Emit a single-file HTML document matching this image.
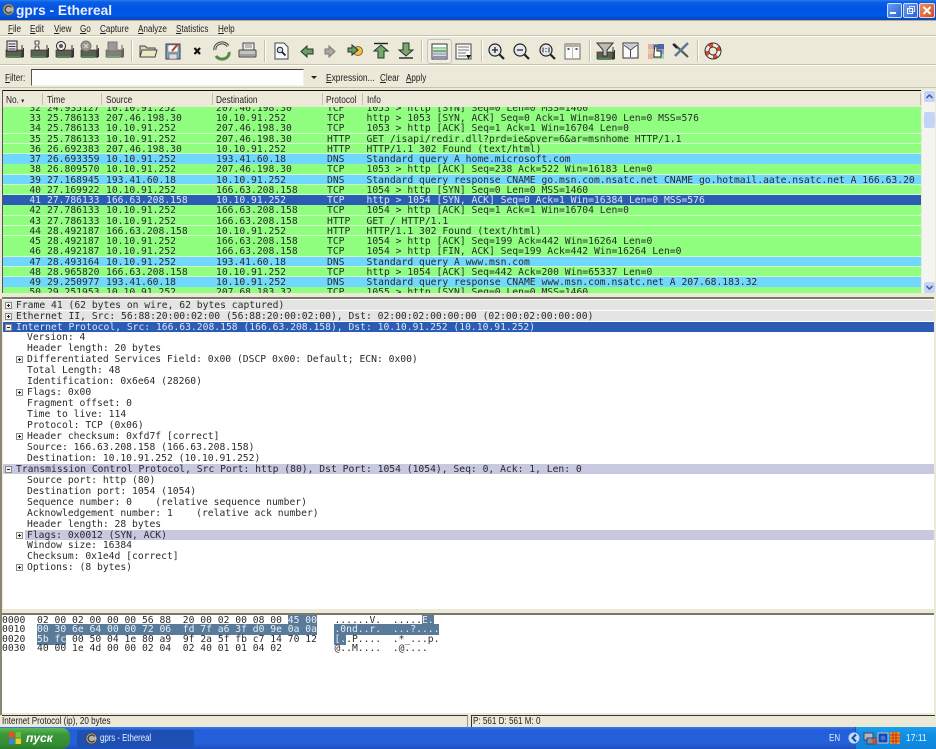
<!DOCTYPE html>
<html><head><meta charset="utf-8"><title>gprs - Ethereal</title>
<style>
html{background:#ece9d8}
html,body{margin:0;padding:0;width:936px;height:749px;overflow:hidden}
body{background:#ece9d8;filter:blur(.35px)}
*{box-sizing:border-box}
.a{position:absolute}
#title{left:0;top:0;width:936px;height:20px;background:linear-gradient(#2a7bf0 0,#0a5fe6 2px,#0054e3 8px,#0058e8 15px,#0a45b8 20px)}
.u{font:10px "Liberation Sans",sans-serif;color:#222;position:absolute;white-space:nowrap;transform:scaleX(.81);transform-origin:0 0}
.u u{text-decoration:underline}
.hl{position:absolute;left:0;width:936px;height:1px}
.m{font-family:"DejaVu Sans Mono",monospace;font-size:9.7px;white-space:pre;color:#2a2a2a}
#list{left:3px;top:107px;width:918px;height:186px;overflow:hidden;background:#d4ffcc}
.r{position:absolute;left:0;width:918px;height:9.6px;line-height:12px;background:#90ff80}
.r span{position:absolute;top:0}
.r span:nth-child(1){right:880px}
.r span:nth-child(2){left:44px}
.r span:nth-child(3){left:103px}
.r span:nth-child(4){left:213px}
.r span:nth-child(5){left:324px}
.r span:nth-child(6){left:363.5px}
.b{background:#70d8ff}
.s{background:#2a5cb4;color:#dde6f6}
#det{left:3px;top:299px;width:931px;height:310px;background:#fff;overflow:hidden}
.d{position:absolute;left:0;height:10.5px;line-height:11px;margin-top:.6px}
.d b{font-weight:normal;position:absolute;top:0}
.x{position:absolute;width:7px;height:7px;border:1px solid #8a8a80;background:#f4f4ee}
.x:before{content:"";position:absolute;left:1px;top:2px;width:3px;height:1px;background:#222}
.x.p:after{content:"";position:absolute;left:2px;top:1px;width:1px;height:3px;background:#222}
#hex{left:2px;top:615px;width:932px;height:98px;background:#fff}
.h{position:absolute;left:0;height:9.4px;line-height:11.4px}
.sl{background:#5a7a9a;color:#e8eef4}
.sep{position:absolute;top:40px;width:2px;height:22px;background:#c4c0aa;border-right:1px solid #fff}
.col{position:absolute;top:93px;width:1px;height:12px;background:#c4c0aa}
.hd{font:10px "Liberation Sans",sans-serif;color:#222;position:absolute;top:95px;white-space:nowrap;transform:scaleX(.83);transform-origin:0 0}
</style></head>
<body>
<div class="a" id="title"></div>
<svg class="a" style="left:2px;top:3px" width="13" height="13" viewBox="0 0 13 13"><circle cx="6.5" cy="6.5" r="5.6" fill="#b4b4ac" stroke="#50605e"/><path d="M9.5 4.5A3.5 3.5 0 1 0 9.5 8.5" fill="none" stroke="#444" stroke-width="1.5"/></svg>
<div class="a" style="left:16px;top:2px;font:bold 14px 'Liberation Sans',sans-serif;color:#eef;white-space:nowrap;transform:scaleX(.98);transform-origin:0 0">gprs - Ethereal</div>
<!-- window buttons -->
<div class="a" style="left:887px;top:3px;width:15px;height:15px;border-radius:2px;background:linear-gradient(135deg,#6a9cf0,#2a62d8);border:1px solid #cfe0fb"></div>
<div class="a" style="left:890px;top:12px;width:6px;height:2px;background:#fff"></div>
<div class="a" style="left:903px;top:3px;width:15px;height:15px;border-radius:2px;background:linear-gradient(135deg,#6a9cf0,#2a62d8);border:1px solid #cfe0fb"></div>
<div class="a" style="left:907px;top:8px;width:6px;height:6px;border:1px solid #fff"></div>
<div class="a" style="left:909px;top:6px;width:6px;height:6px;border:1px solid #dde"></div>
<div class="a" style="left:919px;top:3px;width:16px;height:15px;border-radius:2px;background:linear-gradient(135deg,#f09060,#d04a20);border:1px solid #f3d5c6"></div>
<svg class="a" style="left:919px;top:3px" width="16" height="15"><path d="M4.500 4L11.500 11M11.500 4L4.500 11" stroke="#fff" stroke-width="2"/></svg>
<!-- bars -->
<div class="hl" style="top:20px;height:1px;background:#b0ac98"></div>
<div class="hl" style="top:35px;background:#c8c4ae"></div><div class="hl" style="top:36px;background:#fff"></div>
<div class="hl" style="top:64px;background:#c8c4ae"></div><div class="hl" style="top:65px;background:#fff"></div>
<div class="hl" style="top:87px;background:#c8c4ae"></div>
<!-- menu -->
<span class="u" style="left:8px;top:24px"><u>F</u>ile</span>
<span class="u" style="left:30px;top:24px"><u>E</u>dit</span>
<span class="u" style="left:54px;top:24px"><u>V</u>iew</span>
<span class="u" style="left:80px;top:24px"><u>G</u>o</span>
<span class="u" style="left:100px;top:24px"><u>C</u>apture</span>
<span class="u" style="left:138px;top:24px"><u>A</u>nalyze</span>
<span class="u" style="left:176px;top:24px"><u>S</u>tatistics</span>
<span class="u" style="left:218px;top:24px"><u>H</u>elp</span>
<!-- toolbar -->
<div class="sep" style="left:131px"></div><div class="sep" style="left:264px"></div><div class="sep" style="left:421px"></div><div class="sep" style="left:481px"></div><div class="sep" style="left:589px"></div><div class="sep" style="left:697px"></div>
<div class="a" style="left:427px;top:39px;width:25px;height:25px;border:1px solid #c8c4b4;border-radius:3px;background:#f0eee4"></div>
<svg class="a" style="left:0;top:36px" width="936" height="30" viewBox="0 36 936 30">
<defs>
<g id="card"><rect x="0" y="9" width="17" height="7" fill="#5e5e52" stroke="#333" stroke-width=".7"/><rect x="1" y="15" width="13" height="2" fill="#4f8a5a"/><path d="M16 4V17M17.500 7V16" stroke="#333" stroke-width="1"/></g>
</defs>
<use href="#card" x="6" y="41"/><rect x="7" y="41" width="10" height="10" fill="#e8e8ee" stroke="#222"/><path d="M8.500 44H15.500M8.500 46.500H15.500M8.500 49H15.500" stroke="#334"/>
<use href="#card" x="31" y="41"/><path d="M35 41H39V44H38V47H39V50H35V47H36V44H35Z" fill="#fff" stroke="#222" stroke-width=".8"/>
<use href="#card" x="56" y="41"/><circle cx="61" cy="46" r="4.500" fill="#eee" stroke="#222"/><circle cx="61" cy="46" r="2" fill="#555"/>
<use href="#card" x="81" y="41"/><circle cx="86" cy="46" r="5" fill="#9a9a90" stroke="#777"/><path d="M84 44L88 48M88 44L84 48" stroke="#ddd"/>
<use href="#card" x="106" y="41" opacity=".75"/><rect x="108" y="42" width="9" height="9" fill="#999" stroke="#777"/>
<path d="M140 57V46H145L147 48H155V57Z" fill="#d8d4b4" stroke="#444"/><path d="M140 57L142 50H157L155 57Z" fill="#eee8c4" stroke="#444"/>
<rect x="166" y="44" width="14" height="15" fill="#8aa8c8" stroke="#335"/><rect x="168" y="45" width="10" height="7" fill="#fafaf0" stroke="#666" stroke-width=".5"/><rect x="169" y="54" width="8" height="5" fill="#ddd" stroke="#555" stroke-width=".5"/><path d="M172 51L178 44" stroke="#b0402a" stroke-width="2"/>
<path d="M194.500 48L200 54M200 48L194.500 54" stroke="#111" stroke-width="2.200"/>
<path d="M215 50A7 6 0 0 1 228 46" fill="none" stroke="#444" stroke-width="3"/><path d="M229 52A7 6 0 0 1 216 56" fill="none" stroke="#5a8a4a" stroke-width="3"/><path d="M215 50A7 6 0 0 1 228 46" fill="none" stroke="#cfe8c0" stroke-width="1"/>
<rect x="243" y="43" width="11" height="7" fill="#eee" stroke="#444"/><rect x="239" y="50" width="17" height="7" rx="1" fill="#c4c4c0" stroke="#444"/><path d="M245 45H252M245 47H252" stroke="#888"/><path d="M240 55H255" stroke="#777"/>
<path d="M275 43H284L288 47V59H275Z" fill="#fafafa" stroke="#445"/><circle cx="280" cy="50" r="2.800" fill="#cde" stroke="#222"/><path d="M282 52L285.500 55.500" stroke="#222" stroke-width="1.800"/>
<path d="M301 51.500L307 46V49H313V54H307V57Z" fill="#6aa05a" stroke="#234"/>
<path d="M335 51.500L329 46V49H325V54H329V57Z" fill="#a8a8a0" stroke="#777"/>
<circle cx="358" cy="51" r="4.500" fill="#f0c040" stroke="#864"/><path d="M358 50L352 45V48H348V52H352V55Z" fill="#6aa05a" stroke="#234"/>
<path d="M374 43.500H388" stroke="#222" stroke-width="1.400"/><path d="M381 45L388 51H384V58H378V51H374Z" fill="#7aa86a" stroke="#233"/>
<path d="M399 58H413" stroke="#222" stroke-width="1.400"/><path d="M406 56L413 50H409V43H403V50H399Z" fill="#7aa86a" stroke="#233"/>
<rect x="432" y="44" width="15" height="15" fill="#fff" stroke="#333"/><rect x="433" y="47" width="13" height="2.500" fill="#90d890"/><rect x="433" y="50" width="13" height="2.500" fill="#80a880"/><rect x="433" y="53" width="13" height="2.500" fill="#b0b0d8"/><rect x="433" y="56" width="13" height="2" fill="#9090b0"/>
<rect x="456" y="44" width="15" height="15" fill="#fafafa" stroke="#444"/><path d="M458 47H469M458 50H469M458 53H466M458 56H466" stroke="#777"/><path d="M466 55H471L468.500 59Z" fill="#111"/>
<g fill="#e4e8ee" stroke="#222" stroke-width="1.200"><circle cx="495" cy="50" r="6"/><circle cx="520" cy="50" r="6"/><circle cx="546" cy="50" r="6"/></g>
<path d="M499.500 54.500L504 59M524.500 54.500L529 59M550.500 54.500L555 59" stroke="#222" stroke-width="2.200"/>
<path d="M492 50H498M495 47V53M517 50H523" stroke="#222" stroke-width="1.300"/>
<path d="M543 47.500V52.500M549 47.500V52.500M546 48V49M546 51V52" stroke="#222"/>
<rect x="565" y="44" width="15" height="15" fill="#fafaf6" stroke="#666"/><rect x="565" y="44" width="15" height="3" fill="#b0b0a4"/><path d="M572.500 44V59" stroke="#bbb"/><path d="M567 49H570M568.500 48V50M575 49H578M576.500 48V50" stroke="#556"/>
<use href="#card" x="597" y="43"/><path d="M597 43H613L607 50V56H603V50Z" fill="#bcbcb0" stroke="#333"/>
<rect x="623" y="43" width="15" height="15" fill="#fafafa" stroke="#333"/><path d="M624 45L630.500 50V57M637 45L630.500 50" stroke="#445" fill="none"/><path d="M625 44H636L631.500 49H629.500Z" fill="#c8ccd8"/>
<rect x="648" y="44" width="5" height="5" fill="#e0b0a0"/><rect x="648" y="49" width="5" height="5" fill="#e8c8a8"/><rect x="648" y="54" width="5" height="5" fill="#f0a8a8"/><rect x="653" y="44" width="5" height="5" fill="#8090c8"/><rect x="658" y="44" width="6" height="5" fill="#4868a8"/><rect x="658" y="49" width="6" height="5" fill="#90a0c8"/><rect x="653" y="54" width="11" height="5" fill="#a0d8a8"/>
<path d="M655 46H657V51H661V57H654V52Z" fill="#fff" stroke="#222"/>
<path d="M674 44L688 57" stroke="#555" stroke-width="2.200"/><path d="M688 43L675 56" stroke="#5a7a9a" stroke-width="2.600"/><path d="M673 44L677 48" stroke="#222" stroke-width="2"/>
<circle cx="713" cy="51" r="6" fill="none" stroke="#e04a20" stroke-width="4"/><circle cx="713" cy="51" r="6" fill="none" stroke="#eee" stroke-width="4" stroke-dasharray="5 4.400"/><circle cx="713" cy="51" r="8" fill="none" stroke="#333"/><circle cx="713" cy="51" r="4" fill="none" stroke="#333"/>
</svg>
<!-- filter -->
<span class="u" style="left:5px;top:73px"><u>F</u>ilter:</span>
<div class="a" style="left:31px;top:69px;width:273px;height:17px;background:#fff;border:1px solid #f4f2e8;border-left-color:#555;border-top-color:#444"></div>
<div class="a" style="left:311px;top:76px;border:3px solid transparent;border-top:3px solid #222;width:0;height:0"></div>
<span class="u" style="left:326px;top:73px;transform:scaleX(.84)"><u>E</u>xpression...</span>
<span class="u" style="left:380px;top:73px"><u>C</u>lear</span>
<span class="u" style="left:406px;top:73px"><u>A</u>pply</span>
<!-- list header -->
<div class="a" style="left:2px;top:90px;width:919px;height:1px;background:#111"></div>
<div class="a" style="left:2px;top:90px;width:1px;height:203px;background:#555"></div>
<div class="hd" style="left:6px">No. <span style="font-size:7px">▾</span></div><div class="col" style="left:42px"></div>
<div class="hd" style="left:47px">Time</div><div class="col" style="left:101px"></div>
<div class="hd" style="left:106px">Source</div><div class="col" style="left:212px"></div>
<div class="hd" style="left:216px">Destination</div><div class="col" style="left:322px"></div>
<div class="hd" style="left:326px">Protocol</div><div class="col" style="left:362px"></div>
<div class="hd" style="left:367px">Info</div><div class="col" style="left:920px"></div>
<!-- list -->
<div class="a m" id="list">
<div class="r" style="top:-4.100px"><span>32</span><span>24.935127</span><span>10.10.91.252</span><span>207.46.198.30</span><span>TCP</span><span>1053 &gt; http [SYN] Seq=0 Len=0 MSS=1460</span></div>
<div class="r" style="top:6.150px"><span>33</span><span>25.786133</span><span>207.46.198.30</span><span>10.10.91.252</span><span>TCP</span><span>http &gt; 1053 [SYN, ACK] Seq=0 Ack=1 Win=8190 Len=0 MSS=576</span></div>
<div class="r" style="top:16.400px"><span>34</span><span>25.786133</span><span>10.10.91.252</span><span>207.46.198.30</span><span>TCP</span><span>1053 &gt; http [ACK] Seq=1 Ack=1 Win=16704 Len=0</span></div>
<div class="r" style="top:26.650px"><span>35</span><span>25.786133</span><span>10.10.91.252</span><span>207.46.198.30</span><span>HTTP</span><span>GET /isapi/redir.dll?prd=ie&amp;pver=6&amp;ar=msnhome HTTP/1.1</span></div>
<div class="r" style="top:36.900px"><span>36</span><span>26.692383</span><span>207.46.198.30</span><span>10.10.91.252</span><span>HTTP</span><span>HTTP/1.1 302 Found (text/html)</span></div>
<div class="r b" style="top:47.150px"><span>37</span><span>26.693359</span><span>10.10.91.252</span><span>193.41.60.18</span><span>DNS</span><span>Standard query A home.microsoft.com</span></div>
<div class="r" style="top:57.400px"><span>38</span><span>26.809570</span><span>10.10.91.252</span><span>207.46.198.30</span><span>TCP</span><span>1053 &gt; http [ACK] Seq=238 Ack=522 Win=16183 Len=0</span></div>
<div class="r b" style="top:67.650px"><span>39</span><span>27.168945</span><span>193.41.60.18</span><span>10.10.91.252</span><span>DNS</span><span>Standard query response CNAME go.msn.com.nsatc.net CNAME go.hotmail.aate.nsatc.net A 166.63.20</span></div>
<div class="r" style="top:77.900px"><span>40</span><span>27.169922</span><span>10.10.91.252</span><span>166.63.208.158</span><span>TCP</span><span>1054 &gt; http [SYN] Seq=0 Len=0 MSS=1460</span></div>
<div class="r s" style="top:88.150px"><span>41</span><span>27.786133</span><span>166.63.208.158</span><span>10.10.91.252</span><span>TCP</span><span>http &gt; 1054 [SYN, ACK] Seq=0 Ack=1 Win=16384 Len=0 MSS=576</span></div>
<div class="r" style="top:98.400px"><span>42</span><span>27.786133</span><span>10.10.91.252</span><span>166.63.208.158</span><span>TCP</span><span>1054 &gt; http [ACK] Seq=1 Ack=1 Win=16704 Len=0</span></div>
<div class="r" style="top:108.650px"><span>43</span><span>27.786133</span><span>10.10.91.252</span><span>166.63.208.158</span><span>HTTP</span><span>GET / HTTP/1.1</span></div>
<div class="r" style="top:118.900px"><span>44</span><span>28.492187</span><span>166.63.208.158</span><span>10.10.91.252</span><span>HTTP</span><span>HTTP/1.1 302 Found (text/html)</span></div>
<div class="r" style="top:129.150px"><span>45</span><span>28.492187</span><span>10.10.91.252</span><span>166.63.208.158</span><span>TCP</span><span>1054 &gt; http [ACK] Seq=199 Ack=442 Win=16264 Len=0</span></div>
<div class="r" style="top:139.400px"><span>46</span><span>28.492187</span><span>10.10.91.252</span><span>166.63.208.158</span><span>TCP</span><span>1054 &gt; http [FIN, ACK] Seq=199 Ack=442 Win=16264 Len=0</span></div>
<div class="r b" style="top:149.650px"><span>47</span><span>28.493164</span><span>10.10.91.252</span><span>193.41.60.18</span><span>DNS</span><span>Standard query A www.msn.com</span></div>
<div class="r" style="top:159.900px"><span>48</span><span>28.965820</span><span>166.63.208.158</span><span>10.10.91.252</span><span>TCP</span><span>http &gt; 1054 [ACK] Seq=442 Ack=200 Win=65337 Len=0</span></div>
<div class="r b" style="top:170.150px"><span>49</span><span>29.250977</span><span>193.41.60.18</span><span>10.10.91.252</span><span>DNS</span><span>Standard query response CNAME www.msn.com.nsatc.net A 207.68.183.32</span></div>
<div class="r" style="top:180.400px"><span>50</span><span>29.251953</span><span>10.10.91.252</span><span>207.68.183.32</span><span>TCP</span><span>1055 &gt; http [SYN] Seq=0 Len=0 MSS=1460</span></div>
</div>
<!-- scrollbar -->
<div class="a" style="left:922px;top:90px;width:13px;height:203px;background:#f4f4f0"></div>
<div class="a" style="left:924px;top:91px;width:11px;height:11px;background:#c4d4f8;border-radius:2px"></div>
<svg class="a" style="left:924px;top:91px" width="11" height="11"><path d="M2.500 7L5.500 4L8.500 7" stroke="#3a5a90" stroke-width="1.500" fill="none"/></svg>
<div class="a" style="left:924px;top:112px;width:11px;height:16px;background:#c4d4f8;border-radius:2px"></div>
<div class="a" style="left:924px;top:282px;width:11px;height:11px;background:#c4d4f8;border-radius:2px"></div>
<svg class="a" style="left:924px;top:282px" width="11" height="11"><path d="M2.500 4L5.500 7L8.500 4" stroke="#3a5a90" stroke-width="1.500" fill="none"/></svg>
<!-- divider -->
<div class="a" style="left:2px;top:297px;width:932px;height:2px;background:#7a7868"></div>
<!-- details -->
<div class="a" style="left:0;top:299px;width:2px;height:416px;background:#8a8672"></div>
<div class="a m" id="det">
<div class="d" style="top:0;width:931px;background:#e4e4e4"><i class="x p" style="left:2px;top:2px"></i><b style="left:13px">Frame 41 (62 bytes on wire, 62 bytes captured)</b></div>
<div class="d" style="top:11px;width:931px;background:#e4e4e4"><i class="x p" style="left:2px;top:2px"></i><b style="left:13px">Ethernet II, Src: 56:88:20:00:02:00 (56:88:20:00:02:00), Dst: 02:00:02:00:00:00 (02:00:02:00:00:00)</b></div>
<div class="d" style="top:22px;width:931px;background:#2a5cb4;color:#dde6f6"><i class="x" style="left:2px;top:2px"></i><b style="left:13px">Internet Protocol, Src: 166.63.208.158 (166.63.208.158), Dst: 10.10.91.252 (10.10.91.252)</b></div>
<div class="d" style="top:32.900px"><b style="left:24px">Version: 4</b></div>
<div class="d" style="top:43.800px"><b style="left:24px">Header length: 20 bytes</b></div>
<div class="d" style="top:54.800px"><i class="x p" style="left:13px;top:2px"></i><b style="left:24px">Differentiated Services Field: 0x00 (DSCP 0x00: Default; ECN: 0x00)</b></div>
<div class="d" style="top:65.700px"><b style="left:24px">Total Length: 48</b></div>
<div class="d" style="top:76.700px"><b style="left:24px">Identification: 0x6e64 (28260)</b></div>
<div class="d" style="top:87.600px"><i class="x p" style="left:13px;top:2px"></i><b style="left:24px">Flags: 0x00</b></div>
<div class="d" style="top:98.600px"><b style="left:24px">Fragment offset: 0</b></div>
<div class="d" style="top:109.500px"><b style="left:24px">Time to live: 114</b></div>
<div class="d" style="top:120.500px"><b style="left:24px">Protocol: TCP (0x06)</b></div>
<div class="d" style="top:131.400px"><i class="x p" style="left:13px;top:2px"></i><b style="left:24px">Header checksum: 0xfd7f [correct]</b></div>
<div class="d" style="top:142.400px"><b style="left:24px">Source: 166.63.208.158 (166.63.208.158)</b></div>
<div class="d" style="top:153.300px"><b style="left:24px">Destination: 10.10.91.252 (10.10.91.252)</b></div>
<div class="d" style="top:164.300px;width:931px;background:#c8c8e0"><i class="x" style="left:2px;top:2px"></i><b style="left:13px">Transmission Control Protocol, Src Port: http (80), Dst Port: 1054 (1054), Seq: 0, Ack: 1, Len: 0</b></div>
<div class="d" style="top:175.200px"><b style="left:24px">Source port: http (80)</b></div>
<div class="d" style="top:186.200px"><b style="left:24px">Destination port: 1054 (1054)</b></div>
<div class="d" style="top:197.100px"><b style="left:24px">Sequence number: 0    (relative sequence number)</b></div>
<div class="d" style="top:208.100px"><b style="left:24px">Acknowledgement number: 1    (relative ack number)</b></div>
<div class="d" style="top:219px"><b style="left:24px">Header length: 28 bytes</b></div>
<div class="d" style="top:230px;width:931px"><i class="x p" style="left:13px;top:2px"></i><div class="a" style="left:22px;top:0;width:909px;height:10.500px;background:#c8c8e0"></div><b style="left:24px">Flags: 0x0012 (SYN, ACK)</b></div>
<div class="d" style="top:240.900px"><b style="left:24px">Window size: 16384</b></div>
<div class="d" style="top:251.900px"><b style="left:24px">Checksum: 0x1e4d [correct]</b></div>
<div class="d" style="top:262.800px"><i class="x p" style="left:13px;top:2px"></i><b style="left:24px">Options: (8 bytes)</b></div>
</div>
<!-- divider 2 -->
<div class="a" style="left:2px;top:613px;width:932px;height:2px;background:#7a7868"></div>
<!-- hex -->
<div class="a m" id="hex">
<div class="h" style="top:0">0000  02 00 02 00 00 00 56 88  20 00 02 00 08 00 <span class="sl">45 00</span>   ......V.  .....<span class="sl">E.</span></div>
<div class="h" style="top:9.400px">0010  <span class="sl">00 30 6e 64 00 00 72 06  fd 7f a6 3f d0 9e 0a 0a</span>   <span class="sl">.0nd..r.  ...?....</span></div>
<div class="h" style="top:18.800px">0020  <span class="sl">5b fc</span> 00 50 04 1e 80 a9  9f 2a 5f fb c7 14 70 12   <span class="sl">[.</span>.P....  .*_...p.</div>
<div class="h" style="top:28.200px">0030  40 00 1e 4d 00 00 02 04  02 40 01 01 04 02         @..M....  .@....</div>
</div>
<!-- status -->
<div class="a" style="left:2px;top:715px;width:466px;height:12px;background:#ece9d8;border-top:1px solid #333;border-right:1px solid #999"></div>
<div class="a" style="left:471px;top:715px;width:464px;height:12px;background:#ece9d8;border-top:1px solid #333;border-left:1px solid #333"></div>
<span class="u" style="left:2px;top:716px">Internet Protocol (ip), 20 bytes</span>
<span class="u" style="left:473px;top:716px">P: 561 D: 561 M: 0</span>
<!-- taskbar -->
<div class="a" style="left:0;top:727px;width:936px;height:22px;background:linear-gradient(#3a7ce8 0,#245edc 3px,#2560d8 16px,#1c4ec0 22px)"></div>
<div class="a" style="left:0;top:728px;width:70px;height:21px;border-radius:0 8px 8px 0;background:linear-gradient(#5cb85c,#3a983a 30%,#348c34 80%,#2a7a2a)"></div>
<svg class="a" style="left:8px;top:731px" width="14" height="14"><rect x="1" y="1" width="5.500" height="5.500" fill="#e85020"/><rect x="7.500" y="1" width="5.500" height="5.500" fill="#70c040"/><rect x="1" y="7.500" width="5.500" height="5.500" fill="#4080e0"/><rect x="7.500" y="7.500" width="5.500" height="5.500" fill="#f8c820"/></svg>
<div class="a" style="left:26px;top:731px;font:italic bold 12px 'Liberation Sans',sans-serif;color:#fff">пуск</div>
<div class="a" style="left:77px;top:730px;width:117px;height:18px;background:#1e50b4;border-radius:2px"></div>
<svg class="a" style="left:85px;top:732px" width="13" height="13"><circle cx="6.500" cy="6.500" r="5.600" fill="#b4b4ac" stroke="#444"/><path d="M9.500 4.500A3.500 3.500 0 1 0 9.500 8.500" fill="none" stroke="#444" stroke-width="1.500"/></svg>
<div class="a" style="left:100px;top:733px;font:10px 'Liberation Sans',sans-serif;color:#e8f0ff;white-space:nowrap;transform:scaleX(.78);transform-origin:0 0">gprs - Ethereal</div>
<div class="a" style="left:829px;top:733px;font:10px 'Liberation Sans',sans-serif;color:#dfe8ff;transform:scaleX(.8);transform-origin:0 0">EN</div>
<div class="a" style="left:855px;top:727px;width:81px;height:22px;background:linear-gradient(#1ca0f0,#1290e4 30%,#0f84dc);border-left:1px solid #0f5ab0"></div>
<svg class="a" style="left:848px;top:729px" width="88" height="18">
<circle cx="6" cy="9" r="6" fill="#c0dcf8" stroke="#2a6ad0"/><path d="M8 5.500L4.500 9L8 12.500" stroke="#1a4ab0" stroke-width="2" fill="none"/>
<rect x="16" y="4" width="9" height="7" fill="#b0b8c8" stroke="#445"/><rect x="19" y="9" width="9" height="6" fill="#8090a8" stroke="#445"/><path d="M24 10L29 15M29 10L24 15" stroke="#e04020" stroke-width="1.500"/>
<rect x="30" y="4" width="10" height="10" fill="#1444a8" stroke="#bcd"/><circle cx="35" cy="9" r="2.500" fill="#3a78e0"/>
<rect x="42" y="3" width="10" height="12" fill="#e89020"/><path d="M42 6H52M42 9H52M42 12H52M45 3V15M48 3V15" stroke="#c03020"/>
</svg>
<div class="a" style="left:906px;top:733px;font:10px 'Liberation Sans',sans-serif;color:#eef4ff;transform:scaleX(.85);transform-origin:0 0">17:11</div>
</body></html>
